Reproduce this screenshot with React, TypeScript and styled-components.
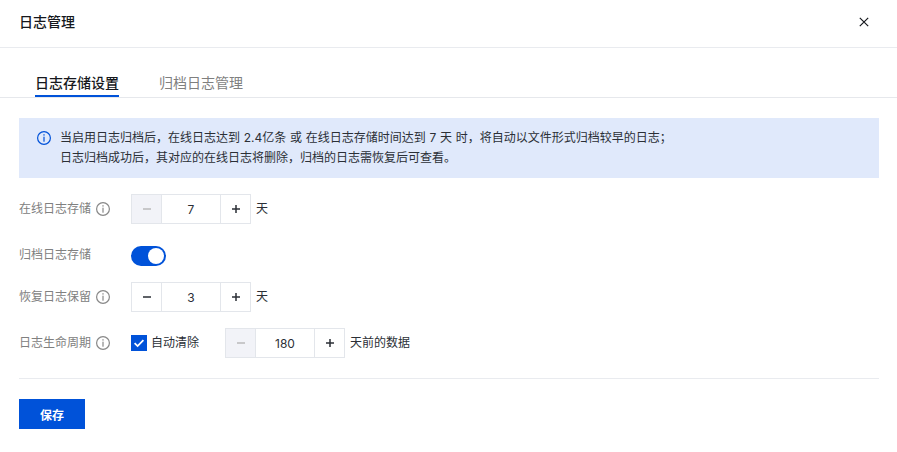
import React from "react";
import styled, { createGlobalStyle } from "styled-components";

const GlobalStyle = createGlobalStyle`
  html, body {
    margin: 0;
    padding: 0;
    background: #fff;
  }
  body {
    font-family: Inter, "Noto Sans CJK SC", sans-serif;
    color: #16181d;
  }
`;

const InfoIcon: React.FC<{ size?: number; color?: string }> = ({ size = 14, color = "#888" }) => (
  <svg width={size} height={size} viewBox="0 0 14 14" fill="none">
    <circle cx="7" cy="7" r="6.4" stroke={color} strokeWidth="1.2" />
    <rect x="6.4" y="3.2" width="1.2" height="1.4" fill={color} />
    <rect x="6.4" y="5.7" width="1.2" height="5" fill={color} />
  </svg>
);

const Stepper: React.FC<{ value: number; minusDisabled?: boolean }> = ({ value, minusDisabled }) => (
  <StepperBox>
    <StepButton $disabled={minusDisabled}>
      <svg width="10" height="10" viewBox="0 0 10 10">
        <rect x="1" y="4.25" width="8" height="1.5" fill="currentColor" />
      </svg>
    </StepButton>
    <StepValue>{value}</StepValue>
    <StepButton>
      <svg width="10" height="10" viewBox="0 0 10 10">
        <rect x="1" y="4.25" width="8" height="1.5" fill="currentColor" />
        <rect x="4.25" y="1" width="1.5" height="8" fill="currentColor" />
      </svg>
    </StepButton>
  </StepperBox>
);

const App: React.FC = () => {
  return (
    <>
      <GlobalStyle />
      <Dialog>
        <Header>
          <Title>日志管理</Title>
          <CloseButton>
            <svg width="10" height="10" viewBox="0 0 10 10" fill="none">
              <path d="M0.8 0.8L9.2 9.2M9.2 0.8L0.8 9.2" stroke="#16181d" strokeWidth="1.2" />
            </svg>
          </CloseButton>
        </Header>
        <Tabs>
          <Tab $active>日志存储设置</Tab>
          <Tab>归档日志管理</Tab>
        </Tabs>
        <Body>
          <Notice>
            <NoticeIcon>
              <InfoIcon size={14} color="#0052d9" />
            </NoticeIcon>
            <NoticeText>
              当启用日志归档后，在线日志达到 2.4亿条 或 在线日志存储时间达到 7 天 时，将自动以文件形式归档较早的日志；
              <br />
              日志归档成功后，其对应的在线日志将删除，归档的日志需恢复后可查看。
            </NoticeText>
          </Notice>
          <Row $height={30} $top={16}>
            <Label>
              在线日志存储
              <InfoIcon />
            </Label>
            <Stepper value={7} minusDisabled />
            <Unit>天</Unit>
          </Row>
          <Row $height={20} $top={22}>
            <Label $lift={2}>归档日志存储</Label>
            <Toggle>
              <Knob />
            </Toggle>
          </Row>
          <Row $height={30} $top={16}>
            <Label>
              恢复日志保留
              <InfoIcon />
            </Label>
            <Stepper value={3} />
            <Unit>天</Unit>
          </Row>
          <Row $height={30} $top={16}>
            <Label>
              日志生命周期
              <InfoIcon />
            </Label>
            <CheckField>
              <CheckBox>
                <svg width="12" height="12" viewBox="0 0 12 12" fill="none">
                  <path d="M1.6 6.2L4.6 9.1L10.4 3.1" stroke="#fff" strokeWidth="1.8" />
                </svg>
              </CheckBox>
              自动清除
            </CheckField>
            <Stepper value={180} minusDisabled />
            <Unit>天前的数据</Unit>
          </Row>
          <Divider />
          <SaveButton>保存</SaveButton>
        </Body>
      </Dialog>
    </>
  );
};

const Dialog = styled.div`
  width: 897px;
  height: 452px;
  overflow: hidden;
  background: #fff;
`;

const Header = styled.div`
  height: 47px;
  padding: 0 28px 0 19px;
  display: flex;
  align-items: center;
  justify-content: space-between;
  border-bottom: 1px solid #e9ebef;
`;

const Title = styled.div`
  font-size: 14px;
  font-weight: 500;
  line-height: 20px;
  margin-top: -3px;
`;

const CloseButton = styled.div`
  display: flex;
  margin-top: -3px;
`;

const Tabs = styled.div`
  height: 49px;
  padding-left: 35px;
  display: flex;
  gap: 40px;
  border-bottom: 1px solid #e6e8ec;
`;

const Tab = styled.div<{ $active?: boolean }>`
  height: 49px;
  box-sizing: border-box;
  padding-top: 25px;
  font-size: 14px;
  line-height: 20px;
  color: ${(p) => (p.$active ? "#16181d" : "#7f7f7f")};
  font-weight: ${(p) => (p.$active ? 500 : 400)};
  border-bottom: 2px solid ${(p) => (p.$active ? "#0052d9" : "transparent")};
`;

const Body = styled.div`
  padding: 20px 18px 0 19px;
`;

const Notice = styled.div`
  height: 60px;
  box-sizing: border-box;
  padding: 10px 18px;
  display: flex;
  gap: 9px;
  background: #e0e9fb;
`;

const NoticeIcon = styled.div`
  display: flex;
  height: 20px;
  align-items: center;
`;

const NoticeText = styled.div`
  font-size: 12px;
  line-height: 20px;
  word-spacing: 0.35px;
  color: #2b2f36;
`;

const Row = styled.div<{ $height: number; $top: number }>`
  height: ${(p) => p.$height}px;
  margin-top: ${(p) => p.$top}px;
  display: flex;
  align-items: center;
`;

const Label = styled.div<{ $lift?: number }>`
  width: 112px;
  display: flex;
  align-items: center;
  gap: 5px;
  font-size: 12px;
  line-height: 18px;
  color: #808080;
  margin-bottom: ${(p) => p.$lift ?? 0}px;
`;

const StepperBox = styled.div`
  width: 120px;
  height: 30px;
  box-sizing: border-box;
  display: flex;
  border: 1px solid #e3e6eb;
`;

const StepButton = styled.div<{ $disabled?: boolean }>`
  width: 29px;
  flex-shrink: 0;
  display: flex;
  align-items: center;
  justify-content: center;
  color: ${(p) => (p.$disabled ? "#bbbbbb" : "#2b2f36")};
  background: ${(p) => (p.$disabled ? "#f2f3f8" : "#fff")};
`;

const StepValue = styled.div`
  flex: 1;
  display: flex;
  align-items: center;
  justify-content: center;
  font-size: 12px;
  color: #2b2f36;
  border-left: 1px solid #e3e6eb;
  border-right: 1px solid #e3e6eb;
`;

const Unit = styled.div`
  margin-left: 5px;
  font-size: 12px;
  line-height: 18px;
  color: #2b2f36;
`;

const Toggle = styled.div`
  width: 35px;
  height: 20px;
  border-radius: 10px;
  background: #0052d9;
  position: relative;
`;

const Knob = styled.div`
  position: absolute;
  top: 2px;
  right: 2px;
  width: 16px;
  height: 16px;
  border-radius: 50%;
  background: #fff;
`;

const CheckField = styled.div`
  width: 94px;
  display: flex;
  align-items: center;
  gap: 4px;
  font-size: 12px;
  line-height: 18px;
  color: #2b2f36;
`;

const CheckBox = styled.div`
  width: 16px;
  height: 16px;
  display: flex;
  align-items: center;
  justify-content: center;
  background: #0052d9;
`;

const Divider = styled.div`
  height: 1px;
  margin-top: 20px;
  background: #e9ebef;
`;

const SaveButton = styled.div`
  width: 66px;
  height: 30px;
  margin-top: 20px;
  display: flex;
  align-items: center;
  justify-content: center;
  font-size: 12px;
  font-weight: 700;
  color: #fff;
  background: #0052d9;
`;

export default App;
